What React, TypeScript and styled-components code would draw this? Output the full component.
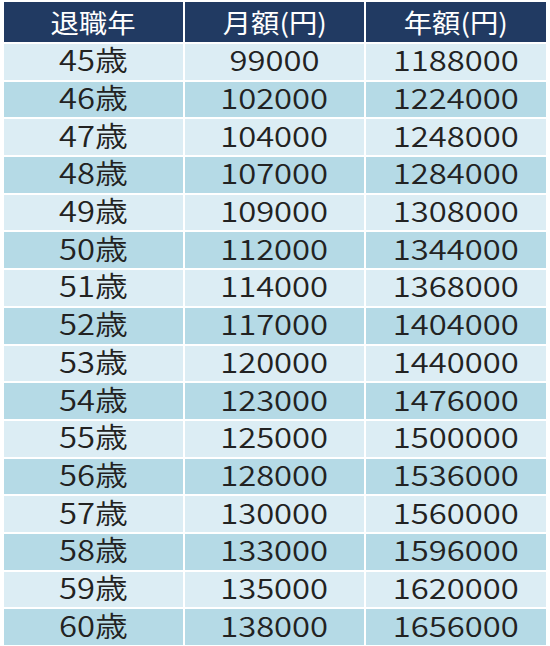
import styled, { createGlobalStyle } from 'styled-components'

const GlobalStyle = createGlobalStyle`
  html, body {
    margin: 0;
    padding: 0;
    background: #ffffff;
  }
  body {
    font-family: "Noto Sans CJK JP", "Noto Sans", sans-serif;
  }
`

const rows: [number, number][] = [
  [45, 99000],
  [46, 102000],
  [47, 104000],
  [48, 107000],
  [49, 109000],
  [50, 112000],
  [51, 114000],
  [52, 117000],
  [53, 120000],
  [54, 123000],
  [55, 125000],
  [56, 128000],
  [57, 130000],
  [58, 133000],
  [59, 135000],
  [60, 138000],
]

const Page = styled.div`
  padding: 2px 4px 0 4px;
`

const Table = styled.div`
  width: 542px;
  height: 643px;
  display: grid;
  grid-template-columns: 179px 179px 180px;
  grid-template-rows: 40px repeat(16, 1fr);
  gap: 2px;
  background: #ffffff;
`

const HeadCell = styled.div`
  background: #213a62;
  color: #ffffff;
  display: flex;
  align-items: center;
  justify-content: center;
  font-size: 26px;
  font-weight: 400;
  line-height: 1;
`

const Cell = styled.div<{ $shade: boolean }>`
  background: ${p => (p.$shade ? '#b5dae6' : '#dcedf4')};
  color: #222222;
  display: flex;
  align-items: center;
  justify-content: center;
  padding-bottom: 5px;
  box-sizing: border-box;
  font-size: 28px;
  font-weight: 350;
  line-height: 1;
`

const Label = styled.span<{ $wide?: boolean }>`
  display: inline-block;
  transform: scaleX(${p => (p.$wide ? 1.17 : 1.09)});
`

const App = () => (
  <>
    <GlobalStyle />
    <Page>
      <Table>
        <HeadCell><Label>退職年</Label></HeadCell>
        <HeadCell><Label>月額(円)</Label></HeadCell>
        <HeadCell><Label>年額(円)</Label></HeadCell>
        {rows.map(([age, monthly], i) => {
          const shade = i % 2 === 1
          return [
            <Cell key={`a${age}`} $shade={shade}><Label $wide>{age}歳</Label></Cell>,
            <Cell key={`m${age}`} $shade={shade}><Label $wide>{monthly}</Label></Cell>,
            <Cell key={`y${age}`} $shade={shade}><Label $wide>{monthly * 12}</Label></Cell>,
          ]
        })}
      </Table>
    </Page>
  </>
)

export default App
